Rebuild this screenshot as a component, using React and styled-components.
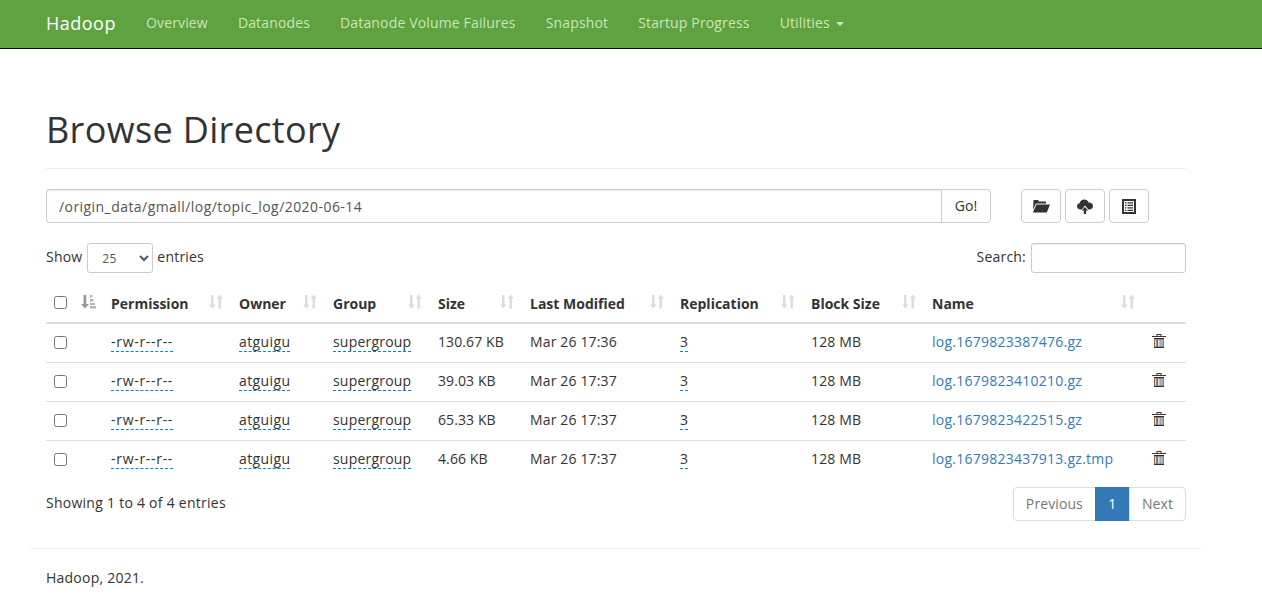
import React from "react"
import styled, { createGlobalStyle } from "styled-components"

const GlobalStyle = createGlobalStyle`
    * {
        box-sizing: border-box;
    }
    body {
        margin: 0;
        font-family: "Open Sans", "Noto Sans", sans-serif;
        font-size: 14px;
        line-height: 20px;
        color: #333;
        background: #fff;
    }
`

const NavBar = styled.nav`
    height: 49px;
    background: #5fa341;
    border-bottom: 1px solid #0b0f09;
    display: flex;
    padding-left: 31px;
`

const Brand = styled.a`
    font-size: 18px;
    letter-spacing: 0.5px;
    line-height: 46px;
    padding: 0 15px;
    color: #fff;
`

const NavLinks = styled.div`
    display: flex;
`

const NavItem = styled.a`
    line-height: 46px;
    letter-spacing: 0.15px;
    padding: 0 15px;
    color: #c8e6b4;
`

const Caret = styled.span`
    display: inline-block;
    width: 0;
    height: 0;
    margin-left: 6px;
    vertical-align: middle;
    border-top: 4px solid #c8e6b4;
    border-left: 4px solid transparent;
    border-right: 4px solid transparent;
`

const Container = styled.div`
    width: 1170px;
    margin-left: 31px;
    padding: 0 ${p => (p.$flush ? 0 : 15)}px;
`

const PageHeader = styled.div`
    margin-top: 61px;
    margin-bottom: 20px;
    padding-bottom: 18px;
    border-bottom: 1px solid #eee;
    h1 {
        margin: 0;
        font-size: 36px;
        font-weight: 400;
        letter-spacing: 0.35px;
        line-height: 40px;
    }
`

const Toolbar = styled.div`
    display: flex;
    align-items: flex-start;
    height: 54px;
`

const PathGroup = styled.div`
    display: flex;
    width: 945px;
`

const PathInput = styled.input`
    flex: 1;
    min-width: 0;
    height: 34px;
    padding: 6px 12px;
    border: 1px solid #ccc;
    border-right: 0;
    border-radius: 4px 0 0 4px;
    font: inherit;
    letter-spacing: 0.44px;
    color: #555;
    box-shadow: inset 0 1px 1px rgba(0, 0, 0, 0.075);
`

const GoButton = styled.button`
    width: 50px;
    height: 34px;
    border: 1px solid #ccc;
    border-radius: 0 4px 4px 0;
    background: #fff;
    font: inherit;
    color: #333;
`

const IconButtons = styled.div`
    display: flex;
    gap: 4px;
    margin-left: 30px;
`

const IconButton = styled.button`
    width: 40px;
    height: 34px;
    padding: 0;
    border: 1px solid #ccc;
    border-radius: 4px;
    background: #fff;
    display: flex;
    align-items: center;
    justify-content: center;
`

const Controls = styled.div`
    display: flex;
    justify-content: space-between;
    align-items: center;
    height: 30px;
    margin-bottom: 10px;
`

const ControlLabel = styled.label`
    display: flex;
    align-items: center;
    gap: 4px;
`

const ControlText = styled.span`
    letter-spacing: 0.2px;
    margin-bottom: 2px;
`

const LengthSelect = styled.select`
    width: 66px;
    height: 30px;
    margin-left: 1px;
    padding: 0 0 0 10px;
    border: 1px solid #ccc;
    border-radius: 3px;
    background: #fff;
    font: inherit;
    font-size: 12px;
    letter-spacing: 0.4px;
    color: #555;
`

const SearchInput = styled.input`
    width: 155px;
    height: 30px;
    margin-left: 1px;
    border: 1px solid #ccc;
    border-radius: 3px;
    box-shadow: inset 0 1px 1px rgba(0, 0, 0, 0.075);
`

const Table = styled.table`
    width: 100%;
    table-layout: fixed;
    border-collapse: collapse;
    margin-bottom: 6px;
`

const Th = styled.th`
    position: relative;
    height: 40px;
    padding: 9px 8px 7px;
    text-align: left;
    font-weight: 700;
    border-bottom: 2px solid #ddd;
    white-space: nowrap;
`

const SortMark = styled.span`
    position: absolute;
    right: 8px;
    top: 11px;
    display: flex;
`

const Row = styled.tr`
    height: 39px;
    &:last-child td {
        border-bottom: 0;
    }
`

const Td = styled.td`
    padding: 7px 8px 9px;
    border-bottom: 1px solid #ddd;
    white-space: nowrap;
    letter-spacing: ${p => p.$spacing || 0}px;
`

const Check = styled.input`
    display: block;
    width: 13px;
    height: 13px;
    margin: ${p => (p.$head ? "-1px 0 1px" : "1px 0 -1px")};
`

const Editable = styled.a`
    color: #333;
    border-bottom: 1px dashed #08c;
    letter-spacing: ${p => p.$spacing}px;
`

const FileLink = styled.a`
    color: #337ab7;
`

const TrashCell = styled.div`
    display: flex;
    margin: -1px 0 1px 1px;
`

const TableFooter = styled.div`
    display: flex;
    justify-content: space-between;
`

const Info = styled.div`
    padding-top: 8px;
    letter-spacing: 0.26px;
`

const Pagination = styled.div`
    display: flex;
    height: 34px;
    margin-top: 2px;
`

const PageItem = styled.a`
    min-width: 35px;
    padding: 6px 12px;
    text-align: center;
    letter-spacing: 0.1px;
    border: 1px solid ${p => (p.$active ? "#337ab7" : "#ddd")};
    margin-left: -1px;
    background: ${p => (p.$active ? "#337ab7" : "#fff")};
    color: ${p => (p.$active ? "#fff" : "#777")};
    &:first-child {
        border-radius: 4px 0 0 4px;
    }
    &:last-child {
        border-radius: 0 4px 4px 0;
    }
`

const FooterRule = styled.hr`
    margin: 27px 0 19px;
    border: 0;
    border-top: 1px solid #eee;
`

const FooterText = styled.p`
    margin: 0;
    padding: 0 15px;
    letter-spacing: 0.23px;
`

const FolderIcon = () => (
    <svg width="18" height="14" viewBox="0 0 18 14">
        <path fill="#333" d="M1.500 1h4.500l1 1.500h7V4.500H4L1 10.500z" />
        <path fill="#333" d="M4.500 5.500H18L14.800 13.500H.800z" />
    </svg>
)

const UploadIcon = () => (
    <svg width="16" height="15" viewBox="0 0 16 15">
        <path fill="#333" d="M3.500 10.500C1.400 10.500 0 9 0 7.300 0 5.800 1 4.500 2.600 4.300 3.100 2 5 .500 7.300 .500c2 0 3.700 1.200 4.300 3 2.500-.2 4.400 1.400 4.400 3.600 0 2-1.400 3.400-3.400 3.400h-1.200L8 6.500 5 10.500z" />
        <path fill="#333" d="M8 8l3.200 3.500H9.200V15H6.800v-3.500H4.800z" />
    </svg>
)

const ListIcon = () => (
    <svg width="14" height="15" viewBox="0 0 14 15">
        <path fill="#333" fillRule="evenodd" d="M0 0h14v15H0zM2 2v11h10V2z" />
        <path fill="#333" d="M3 3.200h1.500v1.300H3zM5.500 3.200H11v1.300H5.500zM3 5.700h1.500V7H3zM5.500 5.700H11V7H5.500zM3 8.200h1.500v1.300H3zM5.500 8.200H11v1.300H5.500zM3 10.700h1.500V12H3zM5.500 10.700H11V12H5.500z" />
    </svg>
)

const SortIcon = () => (
    <svg width="14" height="15" viewBox="0 0 14 15">
        <path fill="#dcdcdc" d="M2 1h2.500v9.500H6.500l-3.200 4-3.200-4H2zM9.500 14.500V4.500H7.500l3.200-4 3.200 4h-2v10z" />
    </svg>
)

const SortedIcon = () => (
    <svg width="15" height="15" viewBox="0 0 15 15">
        <path fill="#999" d="M2.500 1h2.800v9H8L3.900 14.500 0 10h2.500z" />
        <path fill="#b5b5b5" d="M9 1h2.500v2.500H9zM9 5h3.500v2.500H9zM9 9h5v2H9zM9 12h6v2.500H9z" />
    </svg>
)

const TrashIcon = () => (
    <svg width="14" height="14" viewBox="0 0 14 14">
        <path fill="#4a3226" d="M4.500 0h5v2H14v1H0V2h4.500zM5.500 1v1h3V1z" />
        <path fill="#33282a" d="M2 4h10v1.500H2zM2 12.800h10V14H2z" />
        <path fill="#a85f30" d="M2 5.500h1V13H2zM5 5.500h1.200V13H5z" />
        <path fill="#5f86b3" d="M7.500 5.500h1.200V13H7.500zM11 5.500h1V13h-1z" />
        <path fill="#6f6b60" d="M3.800 5.500h1V13h-1zM9.500 5.500h1V13h-1z" />
    </svg>
)

const columns = [
    { label: "Permission", width: 128 },
    { label: "Owner", width: 94 },
    { label: "Group", width: 105 },
    { label: "Size", width: 92 },
    { label: "Last Modified", width: 150 },
    { label: "Replication", width: 131 },
    { label: "Block Size", width: 121 },
    { label: "Name", width: 219 },
]

const files = [
    { size: "130.67 KB", modified: "Mar 26 17:36", name: "log.1679823387476.gz" },
    { size: "39.03 KB", modified: "Mar 26 17:37", name: "log.1679823410210.gz" },
    { size: "65.33 KB", modified: "Mar 26 17:37", name: "log.1679823422515.gz" },
    { size: "4.66 KB", modified: "Mar 26 17:37", name: "log.1679823437913.gz.tmp" },
]

const navItems = ["Overview", "Datanodes", "Datanode Volume Failures", "Snapshot", "Startup Progress"]

const App = () => {
    return (
        <>
            <GlobalStyle />
            <NavBar>
                <Brand>Hadoop</Brand>
                <NavLinks>
                    {navItems.map(item => <NavItem key={item}>{item}</NavItem>)}
                    <NavItem>Utilities<Caret /></NavItem>
                </NavLinks>
            </NavBar>
            <Container>
                <PageHeader>
                    <h1>Browse Directory</h1>
                </PageHeader>
                <Toolbar>
                    <PathGroup>
                        <PathInput defaultValue="/origin_data/gmall/log/topic_log/2020-06-14" />
                        <GoButton>Go!</GoButton>
                    </PathGroup>
                    <IconButtons>
                        <IconButton><FolderIcon /></IconButton>
                        <IconButton><UploadIcon /></IconButton>
                        <IconButton><ListIcon /></IconButton>
                    </IconButtons>
                </Toolbar>
                <Controls>
                    <ControlLabel>
                        <ControlText>Show</ControlText>
                        <LengthSelect defaultValue="25">
                            <option value="25">25</option>
                        </LengthSelect>
                        <ControlText>entries</ControlText>
                    </ControlLabel>
                    <ControlLabel>
                        <ControlText>Search:</ControlText>
                        <SearchInput />
                    </ControlLabel>
                </Controls>
                <Table>
                    <colgroup>
                        <col style={{ width: 27 }} />
                        <col style={{ width: 30 }} />
                        {columns.map(c => <col key={c.label} style={{ width: c.width }} />)}
                        <col />
                    </colgroup>
                    <thead>
                        <tr>
                            <Th><Check type="checkbox" $head /></Th>
                            <Th><SortedIcon /></Th>
                            {columns.map(c => (
                                <Th key={c.label}>
                                    {c.label}
                                    <SortMark><SortIcon /></SortMark>
                                </Th>
                            ))}
                            <Th />
                        </tr>
                    </thead>
                    <tbody>
                        {files.map(file => (
                            <Row key={file.name}>
                                <Td><Check type="checkbox" /></Td>
                                <Td />
                                <Td><Editable $spacing={0.7}>-rw-r--r--</Editable></Td>
                                <Td><Editable $spacing={0.4}>atguigu</Editable></Td>
                                <Td><Editable $spacing={0.2}>supergroup</Editable></Td>
                                <Td $spacing={0.1}>{file.size}</Td>
                                <Td $spacing={0.15}>{file.modified}</Td>
                                <Td><Editable $spacing={0}>3</Editable></Td>
                                <Td $spacing={0.15}>128 MB</Td>
                                <Td $spacing={0.25}><FileLink>{file.name}</FileLink></Td>
                                <Td><TrashCell><TrashIcon /></TrashCell></Td>
                            </Row>
                        ))}
                    </tbody>
                </Table>
                <TableFooter>
                    <Info>Showing 1 to 4 of 4 entries</Info>
                    <Pagination>
                        <PageItem>Previous</PageItem>
                        <PageItem $active>1</PageItem>
                        <PageItem>Next</PageItem>
                    </Pagination>
                </TableFooter>
            </Container>
            <Container $flush>
                <FooterRule />
                <FooterText>Hadoop, 2021.</FooterText>
            </Container>
        </>
    )
}

export default App
